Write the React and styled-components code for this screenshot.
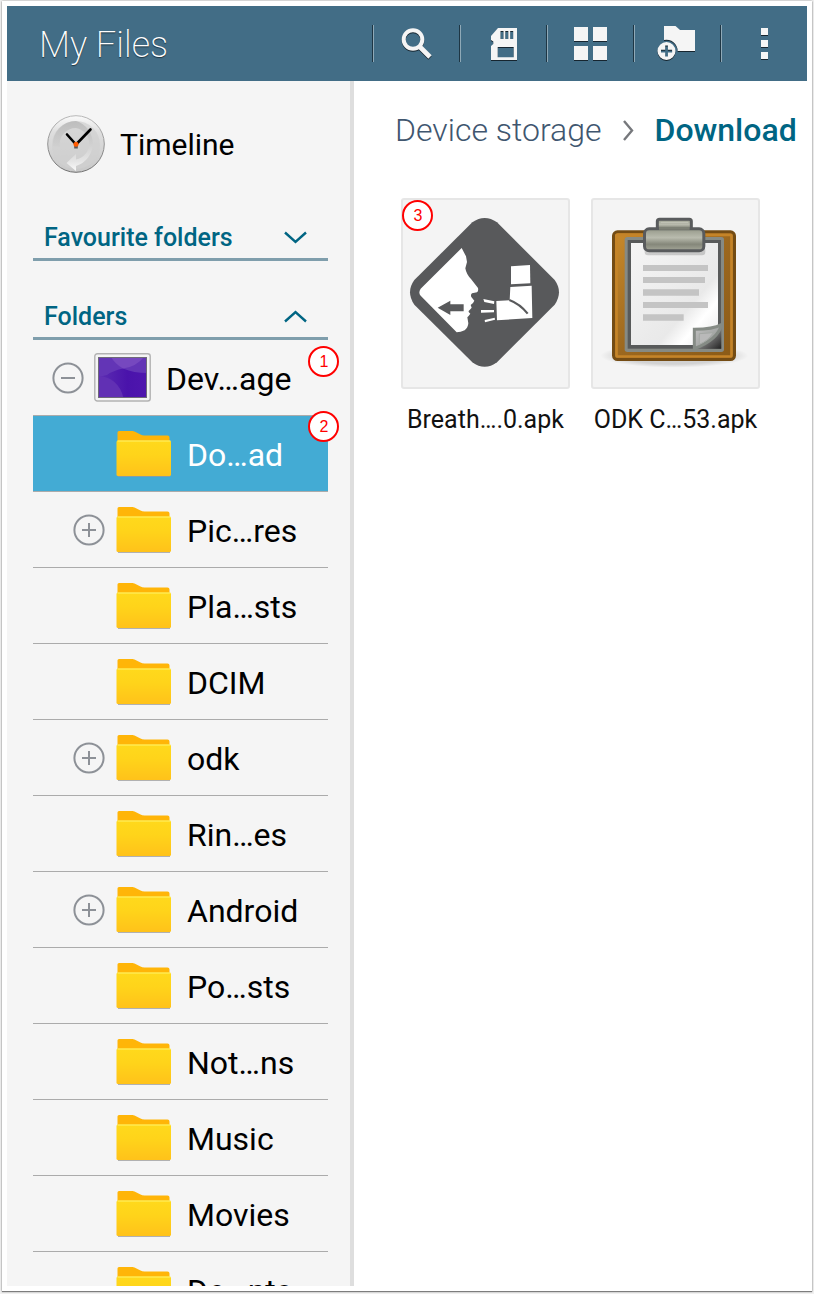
import React from "react";
import styled, { createGlobalStyle, css } from "styled-components";

const GlobalStyle = createGlobalStyle`
  *, *::before, *::after { box-sizing: border-box; }
  body { margin: 0; background: #f0f0f0; }
  button { font: inherit; color: inherit; background: none; border: 0; padding: 0; cursor: pointer; text-align: left; }
  a { color: inherit; text-decoration: none; }
  h1, h2, ul { margin: 0; padding: 0; font: inherit; }
  ul { list-style: none; }
  svg { display: block; flex: none; }
`;

const Frame = styled.div`
  display: flex;
  height: 100vh;
  padding: 1px 2px 3px;
  font-family: Roboto, "Liberation Sans", sans-serif;
  color: #000;
`;

const Screen = styled.div`
  flex: 1;
  display: flex;
  flex-direction: column;
  min-width: 0;
  padding: 5px;
  background: #fff;
  box-shadow: 0 1px 1px 0 #7d7d7d, 0 0 2px 0 #9a9a9a;
`;

const TopBar = styled.header`
  flex: none;
  display: flex;
  align-items: center;
  justify-content: space-between;
  height: 75px;
  padding-left: 32px;
  background: #426d86;
  color: #fff;
`;

const Title = styled.h1`
  padding-top: 2px;
  font-size: 36px;
  font-weight: 200;
  line-height: 44px;
  text-shadow: 0 1px 1px #1f3440;
`;

const Tools = styled.div`
  display: flex;
`;

const ToolButton = styled.button`
  display: flex;
  align-items: center;
  justify-content: center;
  width: 87px;
  height: 37px;
  border-left: 1px solid #1e3644;
  box-shadow: inset 1px 0 0 #8fa9b7;
  padding-left: 1px;

  svg { filter: drop-shadow(0 1px 0 #16252f); }
`;

const Body = styled.div`
  flex: 1;
  display: flex;
  min-height: 0;
`;

const Sidebar = styled.nav`
  flex: none;
  width: 347px;
  padding: 0 22px 0 26px;
  overflow: hidden;
  background: #f5f5f5;
  border-right: 4px solid #dedede;
`;

const Label = styled.span`
  padding-top: 2px;
`;

const TimelineButton = styled.button`
  display: flex;
  align-items: center;
  gap: 15px;
  width: 100%;
  height: 126px;
  padding-left: 14px;
  font-size: 30px;
  line-height: 40px;
`;

const SectionHead = styled.button`
  display: flex;
  align-items: center;
  justify-content: space-between;
  width: 100%;
  height: 45px;
  padding: 0 21px 0 11px;
  border-bottom: 3px solid #7f9eac;
  color: #006583;
  font-size: 25px;
  font-weight: 500;
  line-height: 32px;
`;

const Section = styled.section`
  padding-top: ${(p) => (p.$first ? 9 : 34)}px;
`;

const Row = styled.li`
  position: relative;
  display: flex;
  align-items: center;
  height: 76px;
  padding-left: ${(p) => (p.$root ? 19 : 40)}px;
  border-bottom: 1px solid #ababab;
  font-size: 32px;
  line-height: 40px;
  ${(p) =>
    p.$selected &&
    css`
      background: #43abd4;
      color: #fff;
    `}
`;

const Toggle = styled.button`
  flex: none;
  width: 32px;
  height: 32px;
  margin-right: ${(p) => (p.$root ? 10 : 11)}px;
`;

const ToggleSpace = styled.span`
  flex: none;
  width: 43px;
`;

const RowLink = styled.a`
  flex: 1;
  display: flex;
  align-items: center;
  gap: 15px;
  white-space: nowrap;
`;

const Badge = styled.span`
  position: absolute;
  top: ${(p) => p.$top}px;
  ${(p) => (p.$left === undefined ? "right: -11px;" : `left: ${p.$left}px;`)}
  z-index: 1;
  display: flex;
  align-items: center;
  justify-content: center;
  width: 31px;
  height: 31px;
  padding-left: 1px;
  border: 2px solid #f00;
  border-radius: 50%;
  background: #fff;
  color: #f00;
  font-family: "Liberation Sans", sans-serif;
  font-size: 16px;
  line-height: 20px;
`;

const Main = styled.main`
  flex: 1;
  min-width: 0;
  padding-top: 27px;
  background: #fff;
`;

const Crumbs = styled.nav`
  display: flex;
  align-items: center;
  padding-left: 41px;
  font-size: 32px;
  font-weight: 300;
  line-height: 44px;
  color: #40566f;
  white-space: nowrap;

  svg { margin: 0 21px 0 20px; }
`;

const Current = styled.a`
  color: #006583;
  font-weight: 500;
`;

const Files = styled.ul`
  display: flex;
  flex-wrap: wrap;
  gap: 21px;
  padding: 46px 0 0 47px;
`;

const File = styled.li`
  position: relative;
  width: 169px;
`;

const FileLink = styled.a`
  display: flex;
  flex-direction: column;
  align-items: center;
  gap: 15px;
  color: #111;
  font-size: 25px;
  line-height: 32px;
  white-space: nowrap;
`;

const Thumb = styled.span`
  width: 169px;
  height: 191px;
  border: 2px solid #e6e6e6;
  border-radius: 3px;
  background: #f4f4f4;
`;

const ToolSvg = ({ children }) => (
  <svg width="41" height="41" viewBox="0 0 41 41" fill="#f5f5f5" aria-hidden="true">
    {children}
  </svg>
);

const SearchIcon = () => (
  <ToolSvg>
    <circle cx="17" cy="16.5" r="9.3" fill="none" stroke="#f5f5f5" strokeWidth="4" />
    <path d="M23.5 23.5 34 34" stroke="#f5f5f5" strokeWidth="4.8" />
  </ToolSvg>
);

const SdIcon = () => (
  <ToolSvg>
    <path
      fillRule="evenodd"
      d="M15 5H34V37H8V23L10.300 21V18.500L8 17V13ZM17.500 8V16H20.500V8ZM22.300 8V16H25.300V8ZM27.200 8V16H30.200V8ZM14.700 24V34.300H30.700V24Z"
    />
  </ToolSvg>
);

const GridIcon = () => (
  <ToolSvg>
    <path d="M4 4H18V18H4ZM23 4H37V18H23ZM4 23H18V37H4ZM23 23H37V37H23Z" />
  </ToolSvg>
);

const NewFolderIcon = () => (
  <ToolSvg>
    <path d="M7 3H18.500L23 7H38V28H20.700A11.300 11.300 0 0 0 7 17Z" />
    <path fillRule="evenodd" d="M9.500 19A9 9 0 1 0 9.500 37A9 9 0 1 0 9.500 19ZM8.200 22.500H10.900V26.700H15.100V29.400H10.900V33.600H8.200V29.400H4V26.700H8.200Z" />
  </ToolSvg>
);

const MoreIcon = () => (
  <ToolSvg>
    <path d="M17 5H24V12H17ZM17 17H24V24H17ZM17 29H24V36H17Z" />
  </ToolSvg>
);

const ClockIcon = () => (
  <svg width="58" height="58" viewBox="0 0 58 58" aria-hidden="true">
    <defs>
      <linearGradient id="rim" x1="0" y1="0" x2="0" y2="1">
        <stop offset="0" stopColor="#fafafa" />
        <stop offset=".3" stopColor="#dedede" />
        <stop offset="1" stopColor="#c8c8c8" />
      </linearGradient>
      <linearGradient id="edge" x1="0" y1="0" x2="0" y2="1">
        <stop offset="0" stopColor="#b8b8b8" />
        <stop offset="1" stopColor="#707070" />
      </linearGradient>
      <linearGradient id="arc" x1="0" y1="0" x2="0" y2="1">
        <stop offset="0" stopColor="#bdbdbd" />
        <stop offset=".45" stopColor="#cfcfcf" />
        <stop offset=".8" stopColor="#e4e4e4" />
        <stop offset="1" stopColor="#fafafa" />
      </linearGradient>
      <linearGradient id="arcLeft" x1="0" y1="0" x2="0" y2="1">
        <stop offset="0" stopColor="#bdbdbd" />
        <stop offset="1" stopColor="#d0d0d0" />
      </linearGradient>
    </defs>
    <circle cx="29" cy="29" r="28.300" fill="url(#rim)" stroke="url(#edge)" />
    <circle cx="29" cy="30" r="24" fill="#d0d0d0" opacity=".7" />
    <path d="M29 6A23 23 0 0 0 6 31L13 32A16 16 0 0 1 29 13Z" fill="url(#arcLeft)" />
    <path d="M29 6A23.500 23.500 0 0 1 29 51V56L19.500 48L29 39V44.500A16 16 0 0 0 29 13Z" fill="url(#arc)" />
    <path d="M29 29.500 20 19.500M29 29.500 43.500 14.500" stroke="#000" strokeWidth="2.600" strokeLinecap="round" />
    <path d="M29 30V33.500" stroke="#555" strokeWidth="3.600" />
    <circle cx="29" cy="29.300" r="2.500" fill="#ff5a00" />
  </svg>
);

const Chevron = ({ up }) => (
  <svg width="23" height="13" viewBox="0 0 23 13" fill="none" stroke="#006583" strokeWidth="2.400" aria-hidden="true">
    <path d={up ? "M1 11.500 11.500 2 22 11.500" : "M1 1.500 11.500 11 22 1.500"} />
  </svg>
);

const CrumbArrow = () => (
  <svg width="12" height="22" viewBox="0 0 12 22" fill="none" stroke="#76787c" strokeWidth="2.400" aria-hidden="true">
    <path d="M2 2 10 11.500 2 21" />
  </svg>
);

const ToggleIcon = ({ open }) => (
  <svg width="32" height="32" viewBox="0 0 32 32" fill="none" stroke="#8d9197" strokeWidth="2" aria-hidden="true">
    <circle cx="16" cy="16" r="14.600" />
    <path d={open ? "M9 16H23" : "M9 16H23M16 9V23"} />
  </svg>
);

const FolderIcon = () => (
  <svg width="56" height="48" viewBox="0 0 56 48" aria-hidden="true">
    <defs>
      <linearGradient id="front" x1="0" y1="0" x2="0" y2="1">
        <stop offset="0" stopColor="#ffd91c" />
        <stop offset=".4" stopColor="#ffd41a" />
        <stop offset="1" stopColor="#ffc21a" />
      </linearGradient>
    </defs>
    <path d="M2 46.500H54" stroke="#9a9a9a" strokeOpacity=".75" />
    <path d="M1.500 13V2.500Q1.500 1 3 1H16.500Q18.500 1 20.500 2.500L24.500 4.500Q26 5.500 28.500 5.500H51.500Q53.500 5.500 53.500 7.500V13Z" fill="#ffb508" />
    <rect x=".5" y="10.500" width="54.500" height="35.500" rx="1.500" fill="url(#front)" />
    <path d="M1.500 11H54.500" stroke="#fff36a" />
  </svg>
);

const DeviceIcon = () => (
  <svg width="57" height="49" viewBox="0 0 57 49" aria-hidden="true">
    <defs>
      <clipPath id="deviceScreen">
        <rect x="4.500" y="4.500" width="48" height="40" />
      </clipPath>
      <linearGradient id="deviceShade" x1="0" y1="0" x2="1" y2="0">
        <stop offset="0" stopColor="#5c2eb2" />
        <stop offset=".6" stopColor="#4a13ab" />
        <stop offset="1" stopColor="#4f16ae" />
      </linearGradient>
    </defs>
    <rect x=".8" y=".8" width="55.400" height="47.200" rx="2.500" fill="#f4f4f4" stroke="#b2b2b2" strokeWidth="1.400" />
    <g clipPath="url(#deviceScreen)">
      <rect x="4" y="4" width="49" height="41" fill="url(#deviceShade)" />
      <path d="M4 4H53V20Q40 20 29 15.500Q18 18 13 22L4 24Z" fill="#6335b6" />
      <path d="M17 4Q21 11 29 15.500Q42 14 50 4Z" fill="#7648bf" />
      <path d="M4 22.500Q25 25 29.500 45H4Z" fill="#6130b4" />
    </g>
    <rect x="4.500" y="4.500" width="48" height="40" fill="none" stroke="#6e6a78" />
  </svg>
);

const BreathArt = () => (
  <svg width="165" height="187" viewBox="39 30 495 561" aria-hidden="true">
    <path d="M247 97Q284 71 321 97L494 270Q520 306 494 344L321 517Q284 544 247 517L73 344Q47 306 73 270Z" fill="#58595b" />
    <path
      d="M215 174L228 199L231 216L226 235Q229 253 243 267L264 294Q266 304 261 307L246 310Q241 314 244 321L253 332Q250 340 242 345L245 353L239 360Q235 362 236 366L241 371Q236 378 232 382L235 400Q234 413 224 421Q212 427 200 427L92 317Q84 308 92 296Z"
      fill="#fff"
    />
    <path d="M143 353 181 332V343H221V364H181V375Z" fill="#58595b" />
    <g fill="#fff">
      <path d="M363 229 420 225 421 280 363 283Z" />
      <path d="M361 291 425 287 427 384 321 391 319 333 359 331Z" />
      <path d="M280 327 313 334 312 342 283 336Z" />
      <path d="M273 360H312V367L273 368Z" />
      <path d="M284 390 314 383 315 389 285 397Z" />
    </g>
    <path d="M358 330Q390 342 413 371" fill="none" stroke="#58595b" strokeWidth="6.500" />
  </svg>
);

const ClipboardArt = () => (
  <svg width="165" height="187" viewBox="39 30 495 561" aria-hidden="true">
    <defs>
      <radialGradient id="ground">
        <stop offset=".7" stopColor="#000" stopOpacity=".14" />
        <stop offset="1" stopColor="#000" stopOpacity="0" />
      </radialGradient>
      <linearGradient id="board" x1="0" y1="0" x2="1" y2="1">
        <stop offset="0" stopColor="#c98a2b" />
        <stop offset=".5" stopColor="#9c681f" />
        <stop offset="1" stopColor="#8a5a17" />
      </linearGradient>
      <linearGradient id="sheet" x1="0" y1="0" x2="1" y2="1">
        <stop offset="0" stopColor="#f5f5f5" />
        <stop offset=".65" stopColor="#e9e9e9" />
        <stop offset=".78" stopColor="#fff" />
        <stop offset="1" stopColor="#e6e6e6" />
      </linearGradient>
      <linearGradient id="clip" x1="0" y1="0" x2="0" y2="1">
        <stop offset="0" stopColor="#96998a" />
        <stop offset=".4" stopColor="#b9bbae" />
        <stop offset=".7" stopColor="#85877a" />
        <stop offset="1" stopColor="#a5a799" />
      </linearGradient>
      <linearGradient id="curlShade" x1="0" y1="0" x2="1" y2="1">
        <stop offset=".4" stopColor="#999" />
        <stop offset="1" stopColor="#222" />
      </linearGradient>
      <linearGradient id="curl" x1="0" y1="0" x2="1" y2="1">
        <stop offset="0" stopColor="#c4c4c4" />
        <stop offset="1" stopColor="#8b8f8c" />
      </linearGradient>
    </defs>
    <ellipse cx="283" cy="497" rx="222" ry="36" fill="url(#ground)" />
    <rect x="100.500" y="125.500" width="363" height="383" rx="12" fill="url(#board)" stroke="#744c14" strokeWidth="9" />
    <rect x="109.500" y="134.500" width="345" height="365" rx="4" fill="none" stroke="#c58428" strokeWidth="8" />
    <rect x="134" y="141" width="298" height="345" rx="8" fill="#868a84" />
    <rect x="143" y="150" width="280" height="326" fill="#585a5a" />
    <rect x="153" y="159" width="261" height="306" fill="url(#sheet)" />
    <path d="M189 225H384V243H189ZM189 261H375V279H189ZM189 298H357V317H189ZM189 336H384V354H189ZM189 373H311V392H189Z" fill="#c4c4c4" />
    <path d="M340 476 424 402V476Z" fill="url(#curlShade)" />
    <path d="M343 418Q400 418 424 404Q415 448 343 476Z" fill="url(#curl)" stroke="#858b85" strokeWidth="9" />
    <path d="M358 431L400 428Q385 452 358 463Z" fill="#b9b9b9" stroke="#a5a9a5" strokeWidth="3" />
    <rect x="194" y="172" width="182" height="24" rx="10" fill="#000" opacity=".16" />
    <path d="M232 126V94Q232 88 239 88H328Q334 88 334 94V126Z" fill="url(#clip)" stroke="#595b5d" strokeWidth="9" />
    <rect x="193.500" y="116.500" width="178" height="66" rx="14" fill="url(#clip)" stroke="#595b5d" strokeWidth="9" />
    <path d="M237 115H329" stroke="#7d8075" strokeWidth="9" />
    <path d="M242 97H325" stroke="#c4c6ba" strokeWidth="3" />
  </svg>
);

const tools = [
  ["Search", SearchIcon],
  ["Storage", SdIcon],
  ["View as grid", GridIcon],
  ["Create folder", NewFolderIcon],
  ["More options", MoreIcon],
];

const folders = [
  { name: "Do…ad", selected: true, badge: 2 },
  { name: "Pic…res", expandable: true },
  { name: "Pla…sts" },
  { name: "DCIM" },
  { name: "odk", expandable: true },
  { name: "Rin…es" },
  { name: "Android", expandable: true },
  { name: "Po…sts" },
  { name: "Not…ns" },
  { name: "Music" },
  { name: "Movies" },
  { name: "Do…nts" },
];

const files = [
  { name: "Breath….0.apk", Art: BreathArt, badge: 3 },
  { name: "ODK C…53.apk", Art: ClipboardArt },
];

export default function App() {
  return (
    <>
      <GlobalStyle />
      <Frame>
        <Screen>
          <TopBar>
            <Title>My Files</Title>
            <Tools>
              {tools.map(([label, Icon]) => (
                <ToolButton key={label} type="button" aria-label={label}>
                  <Icon />
                </ToolButton>
              ))}
            </Tools>
          </TopBar>
          <Body>
            <Sidebar aria-label="Folders">
              <TimelineButton type="button">
                <ClockIcon />
                <Label>Timeline</Label>
              </TimelineButton>
              <Section $first>
                <SectionHead type="button" aria-expanded="false">
                  <Label>Favourite folders</Label>
                  <Chevron />
                </SectionHead>
              </Section>
              <Section>
                <SectionHead type="button" aria-expanded="true">
                  <Label>Folders</Label>
                  <Chevron up />
                </SectionHead>
                <ul>
                  <Row $root>
                    <Toggle $root type="button" aria-label="Collapse device storage">
                      <ToggleIcon open />
                    </Toggle>
                    <RowLink href="#device">
                      <DeviceIcon />
                      <Label>Dev…age</Label>
                    </RowLink>
                    <Badge $top={6}>1</Badge>
                  </Row>
                  {folders.map(({ name, selected, expandable, badge }) => (
                    <Row key={name} $selected={selected}>
                      {expandable ? (
                        <Toggle type="button" aria-label={`Expand ${name}`}>
                          <ToggleIcon />
                        </Toggle>
                      ) : (
                        <ToggleSpace />
                      )}
                      <RowLink href="#folder">
                        <FolderIcon />
                        <Label>{name}</Label>
                      </RowLink>
                      {badge && <Badge $top={-5}>{badge}</Badge>}
                    </Row>
                  ))}
                </ul>
              </Section>
            </Sidebar>
            <Main>
              <Crumbs aria-label="Path">
                <a href="#device">Device storage</a>
                <CrumbArrow />
                <Current href="#download" aria-current="page">
                  Download
                </Current>
              </Crumbs>
              <Files>
                {files.map(({ name, Art, badge }) => (
                  <File key={name}>
                    <FileLink href="#file">
                      <Thumb>
                        <Art />
                      </Thumb>
                      {name}
                    </FileLink>
                    {badge && (
                      <Badge $top={2} $left={1}>
                        {badge}
                      </Badge>
                    )}
                  </File>
                ))}
              </Files>
            </Main>
          </Body>
        </Screen>
      </Frame>
    </>
  );
}
